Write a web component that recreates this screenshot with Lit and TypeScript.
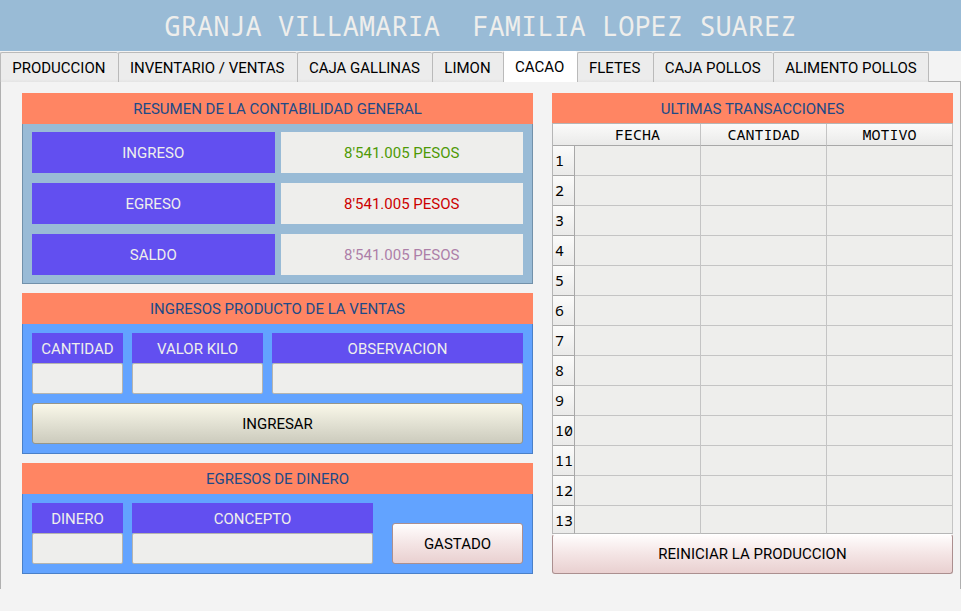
import { LitElement, html, css } from "lit";
import { customElement, state } from "lit/decorators.js";
import { classMap } from "lit/directives/class-map.js";

const TABS = [
  "PRODUCCION",
  "INVENTARIO / VENTAS",
  "CAJA GALLINAS",
  "LIMON",
  "CACAO",
  "FLETES",
  "CAJA POLLOS",
  "ALIMENTO POLLOS",
];

const SUMMARY = [
  { label: "INGRESO", value: "8'541.005 PESOS", tone: "income" },
  { label: "EGRESO", value: "8'541.005 PESOS", tone: "expense" },
  { label: "SALDO", value: "8'541.005 PESOS", tone: "balance" },
];

const ROWS = Array.from({ length: 13 }, (_, i) => i + 1);

@customElement("app-root")
export class AppRoot extends LitElement {
  @state() private active = "CACAO";

  static styles = css`
    :host {
      display: block;
      min-height: 100vh;
      background: #f3f3f3;
      color: #000;
      font: 15px/20px Roboto, sans-serif;
    }
    * {
      box-sizing: border-box;
    }
    button,
    input {
      font: inherit;
      color: inherit;
      margin: 0;
    }
    .banner {
      display: flex;
      align-items: center;
      justify-content: center;
      height: 51px;
      margin: 0;
      background: #99bbd6;
      color: #eeeeec;
      font: 400 27px/36px "Noto Sans Mono", "DejaVu Sans Mono", monospace;
      white-space: pre;
    }
    .tabs {
      display: flex;
      height: 31px;
    }
    .tab {
      flex: 1 0 auto;
      height: 30px;
      margin-top: 1px;
      padding: 1px 12px 0 11px;
      border: 1px solid #bababa;
      border-right: 0;
      border-bottom: 0;
      border-radius: 2px 2px 0 0;
      background: linear-gradient(#ececec 90%, #e4e4e4);
      white-space: nowrap;
    }
    .tab:last-of-type {
      padding-right: 11px;
      border-right: 1px solid #bababa;
    }
    .tab.active {
      height: 31px;
      margin-top: 0;
      padding-top: 0;
      border-top-color: #fff;
      background: #fff;
    }
    .rest {
      flex: none;
      width: 32px;
      border-bottom: 1px solid #b0b0b0;
    }
    .pane {
      display: grid;
      grid-template-columns: 511fr 401fr;
      gap: 19px;
      align-items: start;
      padding: 11px 7px 15px 21px;
      border: solid #b0b0b0;
      border-width: 0 1px;
    }
    .column {
      display: grid;
      gap: 9px;
    }
    .title {
      margin: 0;
      padding: 6px 0 5px;
      background: #ff8563;
      color: #204a87;
      font: inherit;
      text-align: center;
    }
    .body {
      border: 1px solid #4a80c8;
      border-top: 0;
      background: #62a3ff;
      padding: 9px;
    }
    .summary {
      display: grid;
      grid-template-columns: 1fr 1fr;
      gap: 10px 6px;
      margin: 0;
      padding: 8px 9px;
      background: #99bbd6;
      border-color: #7291aa;
    }
    .summary dt,
    .summary dd {
      margin: 0;
      padding: 11px 0 10px;
      text-align: center;
    }
    .summary dt,
    .field label {
      background: #624ff0;
      color: #eeeeec;
    }
    .summary dd {
      background: #eeeeec;
    }
    .income {
      color: #4e9a06;
    }
    .expense {
      color: #cc0000;
    }
    .balance {
      color: #ad7fa8;
    }
    .fields {
      display: grid;
      column-gap: 9px;
      row-gap: 9px;
      align-items: end;
    }
    .income-form {
      grid-template-columns: 91fr 131fr 251fr;
    }
    .expense-form {
      grid-template-columns: 91fr 241fr 141fr;
    }
    .field {
      display: flex;
      flex-direction: column;
      min-width: 0;
    }
    .field label {
      padding: 6px 0 4px;
      text-align: center;
    }
    .field input {
      width: 100%;
      height: 31px;
      padding: 0 6px;
      border: 1px solid #b4b4b0;
      border-radius: 2px;
      background: #eeeeec;
      outline: none;
    }
    .btn {
      height: 41px;
      padding: 0 12px;
      border: 1px solid #ab8f8f;
      border-radius: 3px;
      background: linear-gradient(#fffdfd, #f4e5e5 50%, #e9d0d0);
    }
    .submit {
      grid-column: 1 / -1;
      border-color: #96968a;
      background: linear-gradient(#faf8e9, #e2e1d3 50%, #cccbbd);
    }
    .spend {
      margin-left: 10px;
    }
    .log {
      display: flex;
      flex-direction: column;
    }
    .log .title {
      padding-bottom: 4px;
    }
    table {
      width: 100%;
      table-layout: fixed;
      border-spacing: 0;
      border: solid #b6b6b6;
      border-width: 1px 0 0 1px;
      font: 15px/18px "Noto Sans Mono", "DejaVu Sans Mono", monospace;
    }
    th,
    td {
      height: 30px;
      padding: 0 0 2px;
      border: solid #c4c4c4;
      border-width: 0 1px 1px 0;
      background: #eeeeec;
      font-weight: 400;
    }
    thead th {
      height: 22px;
      border-bottom-color: #a8a8a8;
      background: linear-gradient(#fbfbfa, #eaeae9);
    }
    .corner {
      width: 22px;
      border-right: 0;
    }
    tbody th {
      padding-left: 2px;
      border-color: #a8a8a8;
      background: linear-gradient(#fbfbfa, #eaeae9);
      text-align: left;
    }
    tbody tr:last-child > * {
      height: 28px;
      padding-bottom: 0;
      border-bottom-color: #b6b6b6;
    }
    .reset {
      height: 40px;
      border-top-color: #fff;
    }
  `;

  private field(id: string, label: string) {
    return html`<div class="field">
      <label for=${id}>${label}</label>
      <input id=${id} type="text" autocomplete="off" />
    </div>`;
  }

  render() {
    return html`
      <h1 class="banner">GRANJA VILLAMARIA  FAMILIA LOPEZ SUAREZ</h1>
      <div class="tabs" role="tablist">
        ${TABS.map(
          (tab) => html`<button
            role="tab"
            class=${classMap({ tab: true, active: tab === this.active })}
            aria-selected=${tab === this.active}
            @click=${() => (this.active = tab)}
          >${tab}</button>`
        )}
        <div class="rest"></div>
      </div>
      <main class="pane">
        <div class="column">
          <section>
            <h2 class="title">RESUMEN DE LA CONTABILIDAD GENERAL</h2>
            <dl class="body summary">
              ${SUMMARY.map(
                (row) => html`<dt>${row.label}</dt>
                  <dd class=${row.tone}>${row.value}</dd>`
              )}
            </dl>
          </section>
          <section>
            <h2 class="title">INGRESOS PRODUCTO DE LA VENTAS</h2>
            <div class="body fields income-form">
              ${this.field("cantidad", "CANTIDAD")}
              ${this.field("valor", "VALOR KILO")}
              ${this.field("observacion", "OBSERVACION")}
              <button class="btn submit">INGRESAR</button>
            </div>
          </section>
          <section>
            <h2 class="title">EGRESOS DE DINERO</h2>
            <div class="body fields expense-form">
              ${this.field("dinero", "DINERO")}
              ${this.field("concepto", "CONCEPTO")}
              <button class="btn spend">GASTADO</button>
            </div>
          </section>
        </div>
        <section class="log">
          <h2 class="title">ULTIMAS TRANSACCIONES</h2>
          <table>
            <thead>
              <tr>
                <th class="corner"></th>
                <th scope="col">FECHA</th>
                <th scope="col">CANTIDAD</th>
                <th scope="col">MOTIVO</th>
              </tr>
            </thead>
            <tbody>
              ${ROWS.map(
                (n) => html`<tr>
                  <th scope="row">${n}</th>
                  <td></td>
                  <td></td>
                  <td></td>
                </tr>`
              )}
            </tbody>
          </table>
          <button class="btn reset">REINICIAR LA PRODUCCION</button>
        </section>
      </main>
    `;
  }
}
